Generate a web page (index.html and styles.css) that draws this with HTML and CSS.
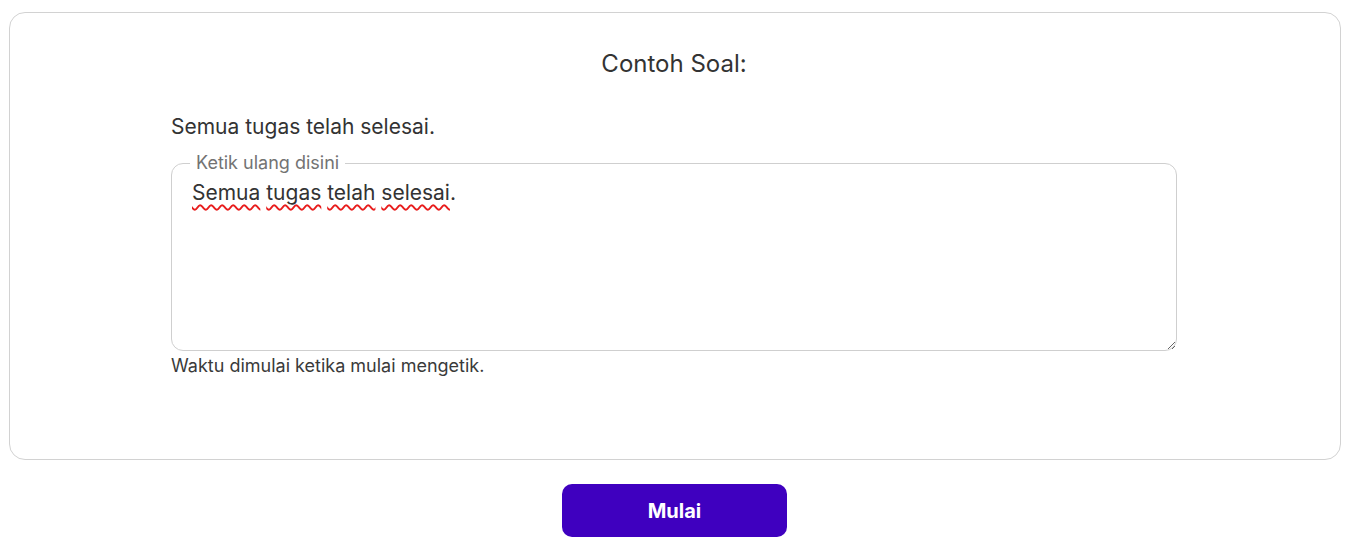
FILE: index.html
```html
<!DOCTYPE html>
<html lang="id">
<head>
<meta charset="utf-8">
<title>Contoh Soal</title>
<link rel="stylesheet" href="styles.css">
</head>
<body>
<div class="card">
  <h2 class="title">Contoh Soal:</h2>
  <div class="content">
    <p class="prompt">Semua tugas telah selesai.</p>
    <fieldset class="field">
      <legend class="legend">Ketik ulang disini</legend>
      <div class="input" contenteditable="true" spellcheck="false"><span class="miss">Semua</span> <span class="miss">tugas</span> <span class="miss">telah</span> <span class="miss">selesai</span>.</div>
    </fieldset>
    <p class="helper">Waktu dimulai ketika mulai mengetik.</p>
  </div>
</div>
<div class="actions">
  <button class="start">Mulai</button>
</div>
</body>
</html>
```
FILE: styles.css
```css
html, body {
  background: #ffffff;
}
body {
  margin: 12px 8px 8px 8px;
  font-family: Inter, "Noto Sans", "Liberation Sans", sans-serif;
  color: #333333;
}
.card {
  margin: 0 0 0 1px;
  border: 1px solid #d2d2d2;
  border-radius: 16px;
  height: 448px;
  box-sizing: border-box;
  padding: 36px 2px 0 0;
}
.title {
  margin: 0;
  text-align: center;
  font-size: 24px;
  font-weight: 400;
  line-height: 30px;
  color: #333333;
}
.content {
  width: 1006px;
  margin: 0 auto;
}
.prompt {
  margin: 34px 0 0 0;
  font-size: 21px;
  line-height: 28px;
  color: #333333;
}
.field {
  margin: 11px 0 0 0;
  padding: 0;
  border: 1px solid #cfcfcf;
  border-radius: 12px;
  min-width: 0;
}
.legend {
  margin-left: 18px;
  padding: 0 6px;
  font-size: 18px;
  line-height: 22px;
  color: #737373;
}
.input {
  display: block;
  width: 100%;
  box-sizing: border-box;
  height: 176px;
  border: none;
  outline: none;
  background: transparent;
  border-radius: 0 0 12px 12px;
  padding: 5px 20px 8px 20px;
  font-family: Inter, "Noto Sans", "Liberation Sans", sans-serif;
  font-size: 21px;
  line-height: 28px;
  color: #333333;
  resize: vertical;
  overflow: auto;
}
.miss {
  text-decoration-line: underline;
  text-decoration-style: wavy;
  text-decoration-color: #e81c1c;
  text-decoration-thickness: 1.5px;
  text-decoration-skip-ink: none;
  text-underline-offset: 4px;
}
.helper {
  margin: 4px 0 0 0;
  font-size: 18px;
  line-height: 22px;
  color: #3a3a3a;
}
.actions {
  display: flex;
  justify-content: center;
  margin-top: 24px;
}
.start {
  width: 225px;
  height: 53px;
  border: none;
  border-radius: 10px;
  background: #3f00bf;
  color: #ffffff;
  font-family: Inter, "Noto Sans", "Liberation Sans", sans-serif;
  font-size: 20px;
  font-weight: 700;
}
```
